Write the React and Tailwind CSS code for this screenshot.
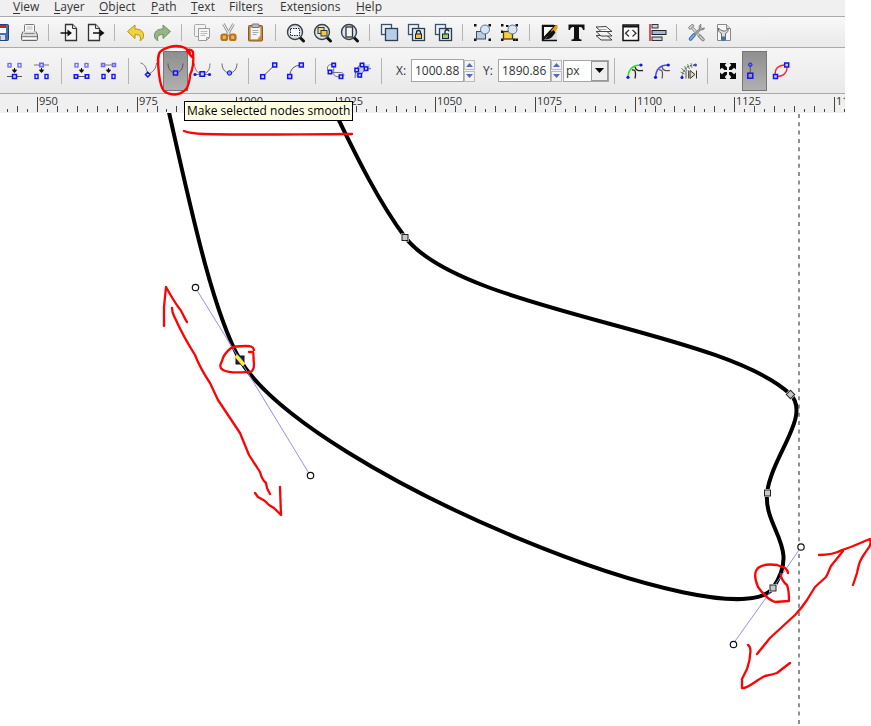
import React, { useState } from "react";

const BLUE = "#1414f0";
const SOFT_BLUE = "#6a6aec";

const Svg = ({ children }) => (
  <svg width="21" height="21" viewBox="0 0 21 21" fill="none" className="block shrink-0" aria-hidden="true">
    {children}
  </svg>
);

// Small square node used by most of the node tool icons
const Node = ({ x, y, s = 4, color = BLUE, fill = "#c9d3ff" }) => (
  <rect x={x - s / 2} y={y - s / 2} width={s} height={s} stroke={color} strokeWidth="1.5" fill={fill} />
);

const DownArrow = () => (
  <path d="M10 8h1v1.500h1.700v1.200L10.500 13l-2.200-2.300V9.500H10z" fill="#111" />
);

const Lens = ({ children }) => (
  <Svg>
    <path d="M15 15.5l3.5 3.5" stroke="#111" strokeWidth="3" strokeLinecap="round" />
    <circle cx="10" cy="10" r="7.5" fill="#d8e6f5" stroke="#3a3f45" strokeWidth="1.4" />
    {children}
  </Svg>
);

const Corners = () => (
  <path d="M2 2h2.5v2.5H2zM16.5 2H19v2.5h-2.5zM2 16.5h2.5V19H2zM16.5 16.5H19V19h-2.5z" fill="#111" />
);

const icons = {
  save: (
    <Svg>
      <rect x="1.5" y="2.5" width="15" height="16" rx="1" fill="#3f71b5" stroke="#1f4178" />
      <rect x="4" y="3" width="10" height="8" fill="#fff" />
      <path d="M4 3h10v3H4z" fill="#c9271c" />
      <path d="M5 13h8v5H5z" fill="#dcdcdc" />
      <path d="M6.500 14h2v4h-2z" fill="#27436e" />
    </Svg>
  ),
  print: (
    <Svg>
      <path d="M5.500 11V3.500Q5.500 2.500 6.500 2.500h8q1 0 1 1V11" fill="#fafafa" stroke="#777" />
      <path d="M7.500 5h6M7.500 7h6" stroke="#bbb" />
      <path d="M4 9.500L2.500 13v4.500q0 1 1 1h14q1 0 1-1V13L17 9.500" fill="#d9d9d9" stroke="#666" />
      <path d="M5.500 11.500h10M3 14.500h15" stroke="#888" />
      <path d="M4 16.500h13" stroke="#fff" />
    </Svg>
  ),
  importFile: (
    <Svg>
      <path d="M7.500 2.500h7l4 4v12h-11z" fill="#f6f6f6" stroke="#333" strokeWidth="1.3" />
      <path d="M14.500 2.500v4h4" fill="#ddd" stroke="#333" />
      <path d="M2.500 11h8" stroke="#111" strokeWidth="1.5" />
      <path d="M9.500 7.500L14 11l-4.500 3.500z" fill="#111" />
    </Svg>
  ),
  exportFile: (
    <Svg>
      <path d="M3.500 2.500h7l4 4v12h-11z" fill="#f6f6f6" stroke="#333" strokeWidth="1.3" />
      <path d="M10.500 2.500v4h4" fill="#ddd" stroke="#333" />
      <path d="M8 11h8" stroke="#111" strokeWidth="1.5" />
      <path d="M15 7.500l4.500 3.500-4.500 3.500z" fill="#111" />
    </Svg>
  ),
  undo: (
    <Svg>
      <path d="M3.500 9.500L11 3v4c6 0 9 3 8.500 7.500-.3 2-1.500 3.500-3.500 4 1.500-3.500 0-6-5-6v4z" fill="#f0d43c" stroke="#b8920c" />
    </Svg>
  ),
  redo: (
    <Svg>
      <path d="M19.500 9.500L12 3v4c-6 0-9 3-8.500 7.500.3 2 1.500 3.500 3.500 4-1.500-3.500 0-6 5-6v4z" fill="#93b587" stroke="#6f9163" />
    </Svg>
  ),
  copy: (
    <Svg>
      <rect x="3.500" y="2.500" width="11" height="12" rx="1" fill="#f3f3f3" stroke="#aaa" />
      <path d="M7.500 6.500h11v9l-3 3h-8z" fill="#f7f7f7" stroke="#999" />
      <path d="M9.500 9.500h7M9.500 11.500h7M9.500 13.500h5" stroke="#bbb" />
      <path d="M18.500 15.500h-3v3" stroke="#999" />
    </Svg>
  ),
  cut: (
    <Svg>
      <path d="M5.500 2l6.500 11.500M15.500 2L9 13.500" stroke="#888" strokeWidth="2.600" />
      <path d="M5.500 2l6.500 11.500M15.500 2L9 13.500" stroke="#ececec" strokeWidth="1.200" />
      <rect x="3.500" y="12.500" width="5.500" height="5.500" rx="1.800" stroke="#b97417" strokeWidth="2.200" fill="#e6b368" />
      <rect x="12" y="12.500" width="5.500" height="5.500" rx="1.800" stroke="#b97417" strokeWidth="2.200" fill="#e6b368" />
    </Svg>
  ),
  paste: (
    <Svg>
      <rect x="3.500" y="3.500" width="14" height="15.500" rx="1" fill="#c78a33" stroke="#8a5a1a" />
      <path d="M5.500 5.500h10v8l-3 4h-7z" fill="#f5f5f5" stroke="#aaa" strokeWidth=".7" />
      <rect x="7" y="2" width="7" height="3.500" rx="1" fill="#bbb" stroke="#777" />
      <path d="M7.500 8.500h6M7.500 10.500h6M7.500 12.500h4" stroke="#aaa" />
    </Svg>
  ),
  zoomSelection: (
    <Lens>
      <rect x="5.500" y="6.500" width="9" height="7" fill="#fff" stroke="#222" strokeDasharray="1.500 1" />
    </Lens>
  ),
  zoomDrawing: (
    <Lens>
      <rect x="6" y="5.500" width="6" height="6" fill="#f4dd7a" stroke="#333" />
      <rect x="9" y="8.500" width="6" height="5.500" fill="#f6c93c" stroke="#333" />
    </Lens>
  ),
  zoomPage: (
    <Lens>
      <rect x="7" y="5" width="6.500" height="10" fill="#f4f4f4" stroke="#333" strokeWidth="1.300" />
    </Lens>
  ),
  duplicate: (
    <Svg>
      <rect x="2.500" y="2.500" width="10" height="10" fill="#eef4fb" stroke="#3d5168" strokeWidth="1.300" />
      <rect x="6.500" y="6.500" width="12" height="12" fill="#b8cee6" stroke="#2c3e54" strokeWidth="1.300" />
    </Svg>
  ),
  clone: (
    <Svg>
      <rect x="2.500" y="2.500" width="10" height="10" fill="#eef4fb" stroke="#3d5168" strokeWidth="1.300" />
      <rect x="6.500" y="6.500" width="12" height="12" fill="#dfeaf5" stroke="#2c3e54" strokeWidth="1.300" />
      <path d="M10.500 12v-1.500a2 2 0 014 0V12" stroke="#222" strokeWidth="1.300" />
      <rect x="9.500" y="12" width="6" height="4.500" fill="#f3c52d" stroke="#222" />
    </Svg>
  ),
  unlink: (
    <Svg>
      <rect x="2.500" y="2.500" width="10" height="10" fill="#eef4fb" stroke="#3d5168" strokeWidth="1.300" />
      <rect x="6.500" y="6.500" width="12" height="12" fill="#dfeaf5" stroke="#2c3e54" strokeWidth="1.300" />
      <path d="M12 12v-2a2 2 0 014-.500" stroke="#222" strokeWidth="1.300" />
      <rect x="9.500" y="12" width="6" height="4.500" fill="#8fd06a" stroke="#222" />
    </Svg>
  ),
  group: (
    <Svg>
      <Corners />
      <rect x="4.500" y="9.500" width="9" height="7.500" fill="#b9cce0" stroke="#3b4c5f" />
      <circle cx="13" cy="7.500" r="4.500" fill="#d7e4f1" stroke="#5b738c" />
    </Svg>
  ),
  ungroup: (
    <Svg>
      <Corners />
      <path d="M2 8.500h2V11H2zM14 16.500h2.500V19H14zM7 3h2.500v2H7z" fill="#111" />
      <rect x="4.500" y="9.500" width="9" height="7.500" fill="#f5cf45" stroke="#4d3c05" strokeWidth="1.300" />
      <circle cx="13.500" cy="7.500" r="4.500" fill="#d7e4f1" stroke="#5b738c" />
    </Svg>
  ),
  fillStroke: (
    <Svg>
      <path d="M3 3h15.500L5 18.500H3z" fill="#111" />
      <path d="M5 5h9L5 14.500z" fill="#fff" />
      <path d="M18 5v13.500H4.500z" fill="#dedede" />
      <path d="M3 3.500h12M3.500 3v15.500h14.500" stroke="#111" strokeWidth="1.400" />
      <path d="M17 2.500l2 3-4 6-3-2.500z" fill="#f39b19" />
      <path d="M14.500 8l2 2.500-3 4c-2 2.500-5 3-8 2.500 3-1 3-4 5-5.500z" fill="#111" />
    </Svg>
  ),
  text: (
    <Svg>
      <path d="M2.500 2.500h16v5.500h-1.500q-.5-3-3-3h-1v11q0 1.500 2.500 1.500V19h-10v-1.500q2.500 0 2.500-1.500V5H7q-2.500 0-3 3H2.500z" fill="#111" />
    </Svg>
  ),
  layers: (
    <Svg>
      <path d="M3 13.500h11l5 4.500H8z" fill="#eee" stroke="#444" />
      <path d="M3 9.500h11l5 4.500H8z" fill="#f2f2f2" stroke="#444" />
      <path d="M3 5l10-.500 6 5H8z" fill="#f9f9f9" stroke="#444" />
      <path d="M6 7.500h7.500" stroke="#aaa" />
    </Svg>
  ),
  xml: (
    <Svg>
      <rect x="3" y="3" width="15.500" height="15.500" fill="#fff" stroke="#111" strokeWidth="1.500" />
      <path d="M3 4.500h15.500" stroke="#111" strokeWidth="2" />
      <path d="M9 8l-3.500 3.200L9 14.500M12.500 8l3.500 3.200-3.500 3.300" stroke="#333" strokeWidth="1.300" />
    </Svg>
  ),
  align: (
    <Svg>
      <path d="M3 2v17" stroke="#d3222a" strokeWidth="1.500" />
      <rect x="5" y="2.500" width="6" height="3.500" fill="#c3d4e6" stroke="#333" />
      <rect x="5" y="8.500" width="14" height="4" fill="#9fb9d6" stroke="#222" />
      <rect x="5" y="15" width="10" height="3.500" fill="#c3d4e6" stroke="#333" />
    </Svg>
  ),
  preferences: (
    <Svg>
      <path d="M5 4.500l9.500 10.500" stroke="#888" strokeWidth="3" />
      <path d="M5 4.500l9.500 10.500" stroke="#ddd" strokeWidth="1.400" />
      <path d="M14 14.500l3 3" stroke="#888" strokeWidth="3.600" strokeLinecap="round" />
      <path d="M14 14.500l3 3" stroke="#ccc" strokeWidth="1.600" strokeLinecap="round" />
      <path d="M15.500 6L9 12" stroke="#999" strokeWidth="3" />
      <path d="M15 2.500c-2 .5-2.500 3-1 4.500s4 1 4.500-1L16 6.500 14.500 5z" fill="#ccc" stroke="#777" />
      <path d="M8 13l-3.500 4" stroke="#3a6ea8" strokeWidth="3.600" strokeLinecap="round" />
      <path d="M8 13l-3.500 4" stroke="#8db7e2" strokeWidth="1.400" strokeLinecap="round" />
      <path d="M2.500 5.500L6 2.500l2 1-4 4z" fill="#ddd" stroke="#777" />
    </Svg>
  ),
  docProps: (
    <Svg>
      <path d="M4.500 2.500h9l4 4v12h-13z" fill="#f7f7f7" stroke="#888" />
      <path d="M13.500 2.500v4h4" fill="#ddd" stroke="#888" />
      <path d="M5.500 6c-.5 3 1 4.500 3 5.500v6.500h4v-6.500c2-1 3-2.500 2.500-5l-2.500 2.500h-2.500L7.500 8z" fill="#ddd" stroke="#666" />
      <path d="M9 14.500h3V19H9z" fill="#3d74b4" />
    </Svg>
  ),
  insertNode: (
    <Svg>
      <rect x="4" y="3.500" width="3" height="3.500" stroke={SOFT_BLUE} strokeWidth="1.300" />
      <rect x="14" y="3.500" width="3" height="3.500" stroke={SOFT_BLUE} strokeWidth="1.300" />
      <DownArrow />
      <path d="M3 16.500h15" stroke="#555" />
      <Node x={10.5} y={16.5} />
    </Svg>
  ),
  deleteNode: (
    <Svg>
      <path d="M3 5h15" stroke="#777" />
      <Node x={10.5} y={5} s={3.5} color={SOFT_BLUE} />
      <DownArrow />
      <rect x="4" y="14.500" width="3" height="4" stroke={BLUE} strokeWidth="1.400" />
      <rect x="14" y="14.500" width="3" height="4" stroke={BLUE} strokeWidth="1.400" />
    </Svg>
  ),
  joinSegment: (
    <Svg>
      <rect x="4" y="3.500" width="3" height="3.500" stroke={SOFT_BLUE} strokeWidth="1.300" />
      <rect x="14" y="3.500" width="3" height="3.500" stroke={SOFT_BLUE} strokeWidth="1.300" />
      <DownArrow />
      <path d="M5 16.500h11" stroke="#555" />
      <Node x={5} y={16.5} s={3.5} />
      <Node x={16} y={16.5} s={3.5} />
    </Svg>
  ),
  breakSegment: (
    <Svg>
      <path d="M5 5h11" stroke="#777" />
      <Node x={5} y={5} s={3} color={SOFT_BLUE} />
      <Node x={16} y={5} s={3} color={SOFT_BLUE} />
      <DownArrow />
      <rect x="4" y="14.500" width="3" height="4" stroke={BLUE} strokeWidth="1.400" />
      <rect x="14" y="14.500" width="3" height="4" stroke={BLUE} strokeWidth="1.400" />
    </Svg>
  ),
  cusp: (
    <Svg>
      <path d="M2.500 3c5 1 6 6 7.300 11.500C15 12 18 9 18.500 3" stroke="#777" />
      <path d="M9.800 12.200l2.400 2.400-2.400 2.400-2.400-2.400z" stroke={BLUE} strokeWidth="1.400" fill="#c9d3ff" />
    </Svg>
  ),
  smooth: (
    <Svg>
      <path d="M3 3.500c0 5 3 9.500 7.500 9.500S18 8.500 18 3.500" stroke="#555" />
      <Node x={10.5} y={13} s={4} fill="#aab" />
    </Svg>
  ),
  symmetric: (
    <Svg>
      <path d="M2.500 3.500c0 6 3 10.500 7.800 10.500S18 9.500 18 3.500M3 14.500h15" stroke="#777" />
      <circle cx="3" cy="14.500" r="1.600" fill={BLUE} />
      <circle cx="17.500" cy="14.500" r="1.600" fill={BLUE} />
      <Node x={10.3} y={14} s={4.5} />
    </Svg>
  ),
  auto: (
    <Svg>
      <path d="M3 3.500c0 5 3 9.500 7.500 9.500S18 8.500 18 3.500" stroke="#666" />
      <circle cx="10.500" cy="13" r="2.200" fill="#7f93ff" stroke={BLUE} />
    </Svg>
  ),
  toLine: (
    <Svg>
      <path d="M4.700 16.700l12-11.700" stroke="#555" />
      <Node x={4.7} y={16.7} />
      <Node x={16.7} y={5} />
    </Svg>
  ),
  toCurve: (
    <Svg>
      <path d="M4.700 16.500C5 9 9 5.500 16.300 5" stroke="#555" />
      <Node x={4.7} y={16.5} />
      <Node x={16.3} y={5} />
    </Svg>
  ),
  objectToPath: (
    <Svg>
      <path d="M8.700 5C4 3.500 2 6 2.500 9s2 3.500 5 3.500H15c5 0 5 4.500 1 4.500s-7-.5-7.300-3.500V5" stroke="#777" />
      <Node x={8.7} y={5} s={3.5} />
      <Node x={5} y={12} s={3.5} />
      <Node x={16} y={16.7} s={3.5} />
    </Svg>
  ),
  strokeToPath: (
    <Svg>
      <path d="M3 17c0-8 5-13 15-13v5c-6 0-9 3-9 8z" fill="#bfd0ea" />
      <path d="M3 18c0-9 4-14 9-15M9 18c0-6 4-9 10-9.500" stroke="#666" />
      <Node x={10} y={5} s={3.5} />
      <Node x={4.7} y={10} s={3.5} />
      <Node x={14} y={8.7} s={3.5} />
      <Node x={7.7} y={15.3} s={3.5} />
    </Svg>
  ),
  clipEdit: (
    <Svg>
      <path d="M4 17.300C4.500 9 9 5 17 5" stroke="#27e327" strokeWidth="1.500" />
      <path d="M8 10c4-1 4 4 3 8.500M11 7c1 4 4 4 8 3.500" stroke="#222" strokeWidth="1.300" />
      <circle cx="4" cy="17.300" r="1.600" fill={BLUE} />
      <circle cx="17" cy="5" r="1.600" fill={BLUE} />
    </Svg>
  ),
  maskEdit: (
    <Svg>
      <path d="M4.500 17.300C5 9 9 5 17 5" stroke="#4a4af2" strokeWidth="1.500" />
      <path d="M8 10c4-1 4 4 3 8.500M11 7c1 4 4 4 8 3.500" stroke="#555" strokeWidth="1.200" />
      <circle cx="4.500" cy="17.300" r="1.600" fill={BLUE} />
      <circle cx="17.300" cy="5" r="1.600" fill={BLUE} />
    </Svg>
  ),
  effectParam: (
    <Svg>
      <path d="M4 17.500C5 9 9 5.500 17 5" stroke="#456b45" strokeWidth="1.500" strokeDasharray="2 1" />
      <path d="M3.500 8l3 4M6.500 6l2.500 5M9.500 4l2 5M13 3l1 5M2.500 12l4 2" stroke="#777" strokeWidth=".9" />
      <circle cx="4" cy="17.500" r="1.500" fill={BLUE} />
      <circle cx="17.500" cy="5" r="1.500" fill="#44a" />
      <path d="M8 10.500v8M10.500 10.500v8" stroke="#555" />
      <path d="M12 10.500l5 4-5 4z" fill="#e8d8a0" stroke="#333" />
      <path d="M18.500 10.500v8" stroke="#333" />
    </Svg>
  ),
  transform: (
    <Svg>
      <path
        d="M3 3h6.500L7.700 5l2.300 2.500v2.500H7.500L5 7.700 3 9.500zM19 3h-6.500l1.800 2L12 7.500V10h2.500L17 7.700l2 1.800zM3 19h6.500l-1.800-2 2.300-2.500V12H7.500L5 14.300l-2-1.800zM19 19h-6.500l1.800-2-2.300-2.500V12h2.500l2.500 2.300 2-1.800z"
        fill="#0a0a0a"
      />
    </Svg>
  ),
  handles: (
    <Svg>
      <path d="M6.300 5v10" stroke="#555" />
      <circle cx="6.300" cy="4.700" r="1.700" fill="#5f78e8" stroke={BLUE} />
      <Node x={6.3} y={15.7} s={5} fill="#99a" />
    </Svg>
  ),
  outline: (
    <Svg>
      <path d="M4.500 16.500C3 9 7 4.500 15.700 5c1.500 7-3 12-11.200 11.500z" stroke="#f22" strokeWidth="1.400" />
      <Node x={4.5} y={16.5} />
      <Node x={15.7} y={5} />
    </Svg>
  ),
};

const menus = [
  ["", "V", "iew", "w-[41px]"],
  ["", "L", "ayer", "w-[45px]"],
  ["", "O", "bject", "w-[52px]"],
  ["", "P", "ath", "w-[40px]"],
  ["", "T", "ext", "w-[38px]"],
  ["Filter", "s", "", "w-[51px]"],
  ["Exte", "n", "sions", "w-[76px]"],
  ["", "H", "elp", "w-[40px]"],
];

const ToolButton = ({ icon, label, active, onClick }) => (
  <button
    type="button"
    aria-label={label}
    aria-pressed={active}
    onClick={onClick}
    className={
      active
        ? "mx-px flex h-10 w-[25px] shrink-0 items-center justify-center border border-[#777] bg-linear-to-b from-[#8f8f8f] to-[#b0b0b0]"
        : "mx-px flex h-10 w-[25px] shrink-0 items-center justify-center"
    }
  >
    {icons[icon]}
  </button>
);

const Sep = ({ wide }) => (
  <span className={wide ? "mx-[6px] h-full w-px shrink-0 bg-[#b4b4b4]" : "ml-[5px] mr-[6px] h-full w-px shrink-0 bg-[#b4b4b4]"} />
);

const CommandGroup = ({ items }) =>
  items.map(([icon, label]) => (
    <button key={icon} type="button" aria-label={label} className="mx-px flex w-[25px] shrink-0 items-center justify-center">
      {icons[icon]}
    </button>
  ));

const NumberField = ({ id, label, value, onChange }) => {
  const step = (d) => onChange((parseFloat(value) + d).toFixed(2));
  return (
    <div className="flex shrink-0 items-center">
      <label htmlFor={id} className="w-[15px]">
        {label}
      </label>
      <input
        id={id}
        type="text"
        value={value}
        onChange={(e) => onChange(e.target.value)}
        className="h-[23px] w-[53px] border border-[#a5a5a5] bg-white pl-[3px] outline-none"
      />
      <div className="flex h-[22px] w-[11px] flex-col gap-px">
        <button type="button" aria-label="Increase" onClick={() => step(1)} className="flex flex-1 items-center justify-center border border-[#bbb] bg-[#f3f3f3]">
          <svg width="7" height="4" viewBox="0 0 7 4">
            <path d="M0 4l3.500-4L7 4z" fill="#5569b5" />
          </svg>
        </button>
        <button type="button" aria-label="Decrease" onClick={() => step(-1)} className="flex flex-1 items-center justify-center border border-[#bbb] bg-[#f3f3f3]">
          <svg width="7" height="4" viewBox="0 0 7 4">
            <path d="M0 0l3.500 4L7 0z" fill="#5569b5" />
          </svg>
        </button>
      </div>
    </div>
  );
};

// 25 units per labelled tick, 10 small ticks between two labels
const Ruler = () => {
  const ticks = [];
  for (let i = -3; i <= 200; i++) {
    const x = Math.round(37 + i * 9.96) + 0.5;
    const top = i % 10 === 0 ? 3 : i % 2 === 0 ? 12 : 15;
    ticks.push(<path key={i} d={`M${x} ${top}V18`} stroke="#444" />);
  }
  const labels = [];
  for (let n = 0; n < 20; n++) {
    labels.push(
      <text key={n} x={Math.round(39 + n * 99.6)} y="11" fontSize="11" fill="#333">
        {950 + n * 25}
      </text>
    );
  }
  return (
    <svg className="block h-[19px] w-full overflow-hidden bg-[#f0f0f0]">
      {ticks}
      {labels}
    </svg>
  );
};

const PathNode = ({ x, y, rotate = 0 }) => (
  <g transform={`translate(${x} ${y}) rotate(${rotate})`}>
    <rect x="-4" y="-4" width="8" height="8" fill="#fff" />
    <rect x="-3" y="-3" width="6" height="6" fill="#c8c8c8" stroke="#222" />
  </g>
);

const Handle = ({ x, y }) => <circle cx={x} cy={y} r="3.200" fill="#fff" stroke="#111" strokeWidth="1.200" />;

const Canvas = () => (
  <svg className="block w-full flex-1 bg-white" role="img" aria-label="Drawing canvas">
    <g transform="translate(0 -113)" fill="none">
      <path d="M799 114V2000" stroke="#555" strokeWidth="1.300" strokeDasharray="4 4.300" />
      <path
        d="M168 108C190 205 212 310 240 360C310 475 733 644 773 588C801 547 764 530 767 493C772 455 812 415 790 394C722 330 461 311 405 237C380 204 357 158 333 108"
        stroke="#000"
        strokeWidth="4"
      />
      <path d="M195 287L240 360L310 475M801 547L773 588L733 644" stroke="#8f8fff" />
      <Handle x={195.5} y={287.5} />
      <Handle x={310.5} y={475.5} />
      <Handle x={801} y={547} />
      <Handle x={733.5} y={644.5} />
      <PathNode x={405} y={237.5} />
      <PathNode x={790.5} y={394.5} rotate={45} />
      <PathNode x={767.5} y={493} />
      <PathNode x={773} y={588} />
      <rect x="236" y="356" width="8" height="8" fill="#1a1a8c" stroke="#111" />
      <path d="M236 355.500l8 9.500" stroke="#ffee2e" strokeWidth="3.500" />
    </g>
  </svg>
);

const Markup = () => (
  <svg
    className="pointer-events-none absolute inset-0 h-full w-full"
    fill="none"
    stroke="#fb0404"
    strokeWidth="2.300"
    strokeLinecap="round"
    strokeLinejoin="round"
    aria-hidden="true"
  >
    <path d="M190 53C188 49 183 46 176 46C170 46 163 49 160 52C157 56 158 64 159 74C160 82 161 88 164 91C168 94 172 94.500 175 94.500C180 94 184 92 187 88C189 83 190 79 190 75C193 69 194 62 193 52C191 49 188 49 187 51L192 57" />
    <path d="M184 131C188 133 194 133.500 205 134C235 135 260 134.500 352 134" />
    <path d="M164 326L164 307L166 287C171 296 176 304 179 308C182 311 184 318 187 322" />
    <path d="M172 308C172 313 174 316 175 318Q183 336 195 355Q200 368 210 383L218 400L240 433L249 455L260 472Q262 480 266 483L267 488L270 494" />
    <path d="M255 493L258 497L265 501L269 505L274 508L281 515L280 487" />
    <path d="M254 350C253 346 250 346 246 346C240 346 234 346 231 348C226 352 223 356 222 361C220 365 219 367 223 370C230 374 245 372 250 372C254 371 254 367 254 364C253 358 254 353 253 352L249 352" />
    <path d="M788 573C787 567 782 567 777 565C770 564 762 565 758 568C754 572 755 580 758 587C763 594 769 600 775 602L789 601C789 595 789 590 787 585C784 583 780 577 781 574" />
    <path d="M819 555C828 555 835 554 842 550C852 547 860 543 870 539C872 546 868 548 865 553C860 560 859 563 857 573L853 585" />
    <path d="M843 551L831 566C829 570 828 574 826 577L815 587L807 600C803 606 799 611 795 615L770 638L757 654" />
    <path d="M748 645C751 647 751 650 750 655C750 661 748 665 747 669L742 679L742 688C748 689 756 680 765 676C770 675 774 674 777 673L786 666L790 663" />
  </svg>
);

const App = () => {
  const [x, setX] = useState("1000.88");
  const [y, setY] = useState("1890.86");
  const [nodeType, setNodeType] = useState("smooth");
  const [showHandles, setShowHandles] = useState(true);

  const typeButton = (icon, label) => (
    <ToolButton icon={icon} label={label} active={nodeType === icon} onClick={() => setNodeType(icon)} />
  );

  return (
    <div className="relative flex min-h-screen flex-col bg-white font-['Open_Sans','Noto_Sans',sans-serif] text-xs text-[#333]">
      <header className="mr-[26px]">
        <nav className="flex h-[17px] items-start border-b border-[#aaa] bg-[#f0f0f0] pl-[13px]">
          {menus.map(([before, key, after, width]) => (
            <button key={before + key + after} type="button" className={`${width} shrink-0 text-left leading-[13px]`}>
              {before}
              <span className="underline underline-offset-2">{key}</span>
              {after}
            </button>
          ))}
        </nav>

        <div className="flex h-[31px] overflow-hidden border-b border-[#aaa] bg-linear-to-b from-[#f8f8f8] to-[#e9e9e9] pt-1">
          <div className="-ml-[11px] flex h-[22px] pb-[2px] pt-[3px]">
            <CommandGroup items={[["save", "Save"], ["print", "Print"]]} />
            <Sep />
            <CommandGroup items={[["importFile", "Import"], ["exportFile", "Export"]]} />
            <Sep />
            <CommandGroup items={[["undo", "Undo"], ["redo", "Redo"]]} />
            <Sep wide />
            <CommandGroup items={[["copy", "Copy"], ["cut", "Cut"], ["paste", "Paste"]]} />
            <Sep wide />
            <CommandGroup items={[["zoomSelection", "Zoom selection"], ["zoomDrawing", "Zoom drawing"], ["zoomPage", "Zoom page"]]} />
            <Sep wide />
            <CommandGroup items={[["duplicate", "Duplicate"], ["clone", "Clone"], ["unlink", "Unlink clone"]]} />
            <Sep />
            <CommandGroup items={[["group", "Group"], ["ungroup", "Ungroup"]]} />
            <Sep wide />
            <CommandGroup
              items={[["fillStroke", "Fill and stroke"], ["text", "Text and font"], ["layers", "Layers"], ["xml", "XML editor"], ["align", "Align"]]}
            />
            <Sep />
            <CommandGroup items={[["preferences", "Preferences"], ["docProps", "Document properties"]]} />
          </div>
        </div>

        <div className="flex h-[46px] items-center border-b border-[#aaa] bg-linear-to-b from-[#f6f6f6] to-[#e9e9e9] pl-px">
          <div className="flex h-[26px] items-center">
            <ToolButton icon="insertNode" label="Insert node" />
            <ToolButton icon="deleteNode" label="Delete node" />
            <Sep wide />
            <ToolButton icon="joinSegment" label="Join with segment" />
            <ToolButton icon="breakSegment" label="Delete segment" />
            <Sep wide />
            {typeButton("cusp", "Make selected nodes corner")}
            <div className="relative">
              {typeButton("smooth", "Make selected nodes smooth")}
              <div
                role="tooltip"
                className="absolute left-[22px] top-[50px] z-10 h-5 whitespace-nowrap border border-black bg-[#ffffe1] px-[2px] leading-[18px] text-black"
              >
                Make selected nodes smooth
              </div>
            </div>
            {typeButton("symmetric", "Make selected nodes symmetric")}
            {typeButton("auto", "Make selected nodes auto-smooth")}
            <Sep />
            <ToolButton icon="toLine" label="Make segments lines" />
            <ToolButton icon="toCurve" label="Make segments curves" />
            <Sep wide />
            <ToolButton icon="objectToPath" label="Object to path" />
            <ToolButton icon="strokeToPath" label="Stroke to path" />
            <Sep />
            <div className="ml-2 flex items-center gap-2">
              <NumberField id="node-x" label="X:" value={x} onChange={setX} />
              <NumberField id="node-y" label="Y:" value={y} onChange={setY} />
            </div>
            <div className="relative ml-px h-[22px] w-[46px] shrink-0">
              <select
                aria-label="Unit"
                defaultValue="px"
                className="block h-full w-full appearance-none border border-[#a5a5a5] bg-white pl-[2px] outline-none"
              >
                <option>px</option>
                <option>mm</option>
              </select>
              <span className="pointer-events-none absolute inset-y-px right-px flex w-[17px] items-center justify-center border border-[#999] bg-[#efefef]">
                <svg width="9" height="5" viewBox="0 0 9 5">
                  <path d="M0 0h9L4.500 5z" fill="#000" />
                </svg>
              </span>
            </div>
            <Sep />
            <ToolButton icon="clipEdit" label="Edit clipping path" />
            <ToolButton icon="maskEdit" label="Edit mask" />
            <ToolButton icon="effectParam" label="Next effect parameter" />
            <Sep />
            <ToolButton icon="transform" label="Show transform handles" />
            <ToolButton icon="handles" label="Show Bezier handles" active={showHandles} onClick={() => setShowHandles(!showHandles)} />
            <ToolButton icon="outline" label="Show path outline" />
          </div>
        </div>
        <Ruler />
      </header>

      <Canvas />
      <Markup />
    </div>
  );
};

export default App;
